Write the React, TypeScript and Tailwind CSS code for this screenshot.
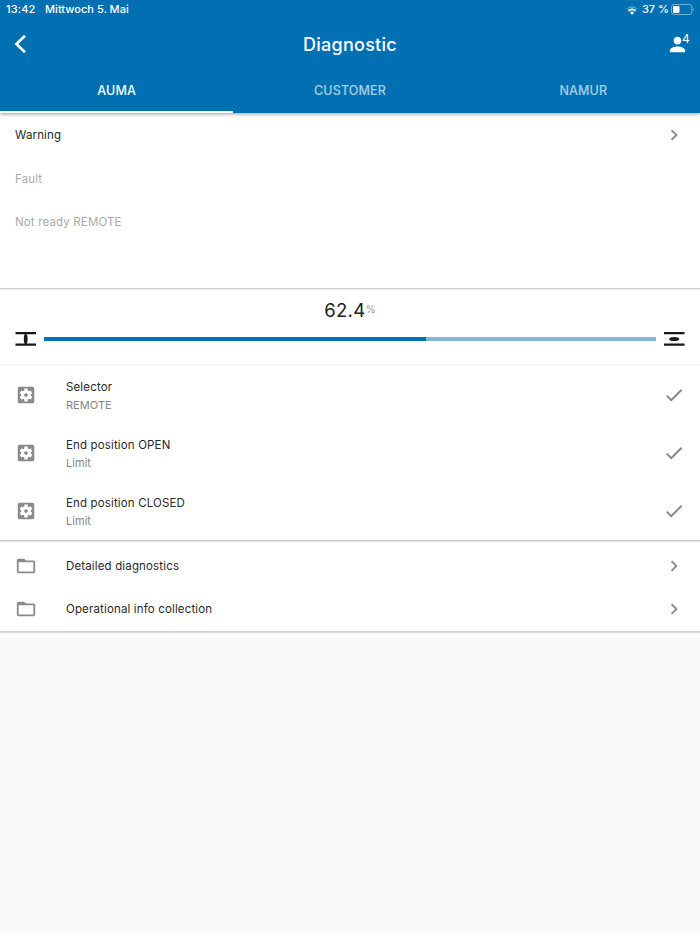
import type { ReactNode } from "react";
import { MdCheck, MdChevronRight, MdFolderOpen, MdPerson, MdSettingsApplications } from "react-icons/md";

function StatusBar() {
  return (
    <div className="flex h-[19px] items-center pl-[6px] pr-[5px] text-[11px] leading-[19px] font-medium">
      <span className="tracking-[0.15px]">13:42</span>
      <span className="ml-[9.5px] tracking-[0.02px]">Mittwoch 5. Mai</span>
      <svg className="mt-[1px] ml-auto h-[9px] w-[12px]" viewBox="0 0 12 9" fill="none">
        <path d="M.7 3.2Q6-1.3 11.3 3.2" stroke="white" strokeOpacity=".35" strokeWidth="1.4" />
        <path d="M2.3 5Q6 1.8 9.7 5" stroke="white" strokeWidth="1.5" />
        <path d="M3.9 6.4Q6 4.8 8.1 6.4L6 8.7Z" fill="white" />
      </svg>
      <span className="ml-[4px] tracking-normal">37 %</span>
      <svg className="ml-[2px] h-[11px] w-[24px]" viewBox="0 0 24 11" fill="none">
        <rect x=".5" y=".5" width="20.5" height="10" rx="2.5" stroke="white" strokeOpacity=".45" />
        <rect x="2" y="2" width="6.5" height="7" rx="1" fill="white" />
        <path d="M22.2 3.7Q23.8 5.5 22.2 7.3Z" fill="white" fillOpacity=".5" />
      </svg>
    </div>
  );
}

function Header() {
  return (
    <header className="relative z-10 h-[113px] bg-[#0070b2] text-white shadow-[0_1px_4px_rgba(0,0,0,0.4)]">
      <StatusBar />
      <div className="grid h-[50px] grid-cols-[1fr_auto_1fr] items-center">
        <svg className="ml-[14px] h-[20px] w-[13px]" viewBox="0 0 13 20" fill="none" stroke="white" strokeWidth="2.6">
          <path d="M11 1.8 2.4 10 11 18.2" />
        </svg>
        <h1 className="pt-px text-[18px] leading-[24px] font-medium tracking-[0.25px]">Diagnostic</h1>
        <div className="flex items-start justify-end pr-[10px]">
          <MdPerson className="-mr-[7px] h-[23px] w-[23px]" />
          <span className="-mt-[1px] text-[12px] leading-[14px]">4</span>
        </div>
      </div>
      <nav className="grid h-[44px] grid-cols-3 text-center text-[12.5px] leading-[43px] font-medium tracking-[0.15px]">
        <span className="h-[44px] border-b-2 border-white">AUMA</span>
        <span className="text-white/65">CUSTOMER</span>
        <span className="text-white/65">NAMUR</span>
      </nav>
    </header>
  );
}

function Message({ children, active = false }: { children: ReactNode; active?: boolean }) {
  return (
    <div className={`flex h-[43.8px] items-center justify-between pl-[15px] pr-[15px] ${active ? "text-[#292929]" : "text-[#aaaaaa]"}`}>
      <span>{children}</span>
      {active && <MdChevronRight className="h-[22px] w-[22px] text-[#888888]" />}
    </div>
  );
}

function Position() {
  return (
    <section className="h-[76px] border-b-2 border-[#f7f7f7] px-[15px] pt-[8px]">
      <div className="flex h-[24px] items-center justify-center text-[#222]">
        <span className="text-[18.5px] leading-[24px] tracking-[0.3px]">62.4</span>
        <span className="text-[10.5px] leading-[24px] tracking-normal text-[#999]">%</span>
      </div>
      <div className="mt-[10px] flex items-center">
        <svg className="h-[14px] w-[21px]" viewBox="0 0 21 14" fill="#191919">
          <path d="M.5 0h20.5v2.3H.5zM.5 11.5h20.5v2.3H.5z" />
          <ellipse cx="10.7" cy="7" rx="1.9" ry="5.3" />
        </svg>
        <div className="mx-[8px] flex h-[4px] flex-1 bg-[#80b7d9]">
          <div className="w-[62.4%] bg-[#0070b2]" />
        </div>
        <svg className="h-[14px] w-[21px]" viewBox="0 0 21 14" fill="#191919">
          <path d="M0 0h20.5v2.3H0zM0 11.5h20.5v2.3H0z" />
          <ellipse cx="10.2" cy="7" rx="5" ry="2" />
        </svg>
      </div>
    </section>
  );
}

function Setting({ title, value }: { title: string; value: string }) {
  return (
    <div className="flex h-[58.2px] items-center pl-[14.7px] pr-[15px]">
      <MdSettingsApplications className="h-[22px] w-[22px] text-[#8a8a8a]" />
      <div className="ml-[29.3px] flex-1 pt-[1.5px]">
        <div className="leading-[19px] text-[#292929]">{title}</div>
        <div className="text-[11px] leading-[17px] tracking-[0.05px] text-[#858585]">{value}</div>
      </div>
      <MdCheck className="h-[22px] w-[22px] text-[#858585]" />
    </div>
  );
}

function Folder({ title }: { title: string }) {
  return (
    <div className="flex h-[43.8px] items-center pl-[14.7px] pr-[15px]">
      <MdFolderOpen className="h-[22px] w-[22px] text-[#8a8a8a]" />
      <span className="ml-[29.3px] flex-1 text-[#292929]">{title}</span>
      <MdChevronRight className="h-[22px] w-[22px] text-[#888888]" />
    </div>
  );
}

export default function App() {
  return (
    <div className="h-[933px] w-[700px] overflow-hidden bg-[#fafafa] font-['Inter',sans-serif] text-[11.5px] leading-[18px] tracking-[0.15px]">
      <Header />
      <section className="h-[176px] border-b border-[#cfcfcf] bg-white">
        <Message active>Warning</Message>
        <Message>Fault</Message>
        <Message>Not ready REMOTE</Message>
      </section>
      <main className="bg-white shadow-[0_1px_1px_rgba(0,0,0,0.12)]">
        <div className="h-px bg-[#ececec]" />
        <Position />
        <section className="h-[175px] border-b border-[#c8c8c8]">
          <Setting title="Selector" value="REMOTE" />
          <Setting title="End position OPEN" value="Limit" />
          <Setting title="End position CLOSED" value="Limit" />
        </section>
        <div className="h-px bg-[#e2e2e2]" />
        <section className="h-[90px] border-b border-[#cfcfcf] pt-[1.7px]">
          <Folder title="Detailed diagnostics" />
          <Folder title="Operational info collection" />
        </section>
      </main>
    </div>
  );
}
